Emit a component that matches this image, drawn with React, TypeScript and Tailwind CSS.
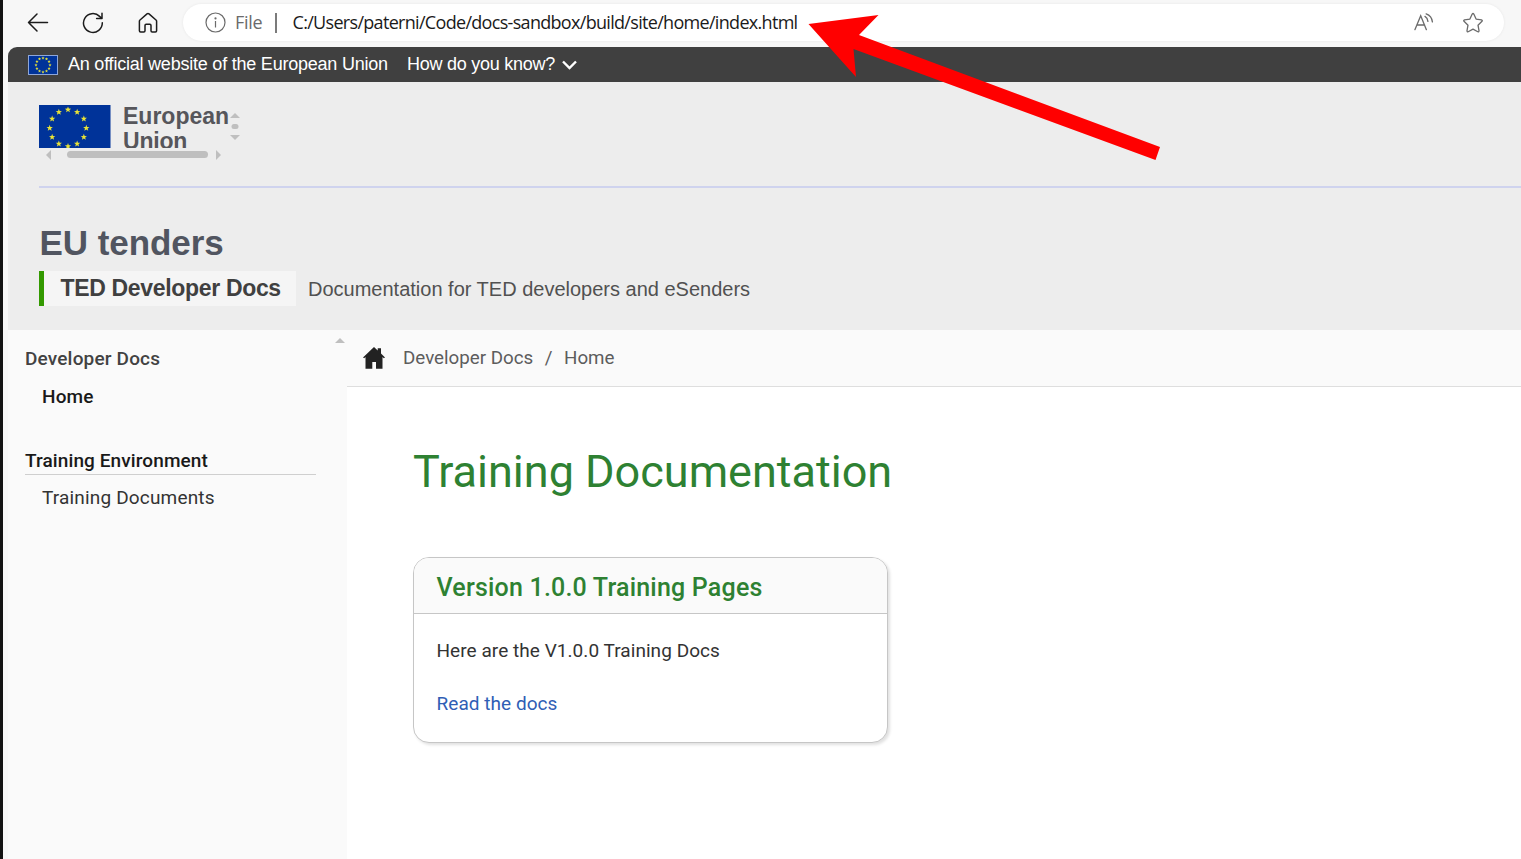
import React from "react";

const arial = "font-['Liberation_Sans',Arial,sans-serif]";
const segoe = "font-['Open_Sans','Noto_Sans',sans-serif]";

function star(cx: number, cy: number, r: number) {
  const pts: string[] = [];
  for (let i = 0; i < 10; i++) {
    const a = -Math.PI / 2 + (i * Math.PI) / 5;
    const d = i % 2 ? r * 0.42 : r;
    pts.push(`${(cx + d * Math.cos(a)).toFixed(2)},${(cy + d * Math.sin(a)).toFixed(2)}`);
  }
  return pts.join(" ");
}

function Stars({ cx, cy, ring, r }: { cx: number; cy: number; ring: number; r: number }) {
  return (
    <g fill="#e8e337">
      {Array.from({ length: 12 }, (_, i) => {
        const a = (i * Math.PI) / 6;
        return <polygon key={i} points={star(cx + ring * Math.cos(a), cy + ring * Math.sin(a), r)} />;
      })}
    </g>
  );
}

function Toolbar() {
  return (
    <header className="flex h-[47px] items-start bg-[#f7f7f7]">
      <nav className="flex h-[46px] w-[180px] shrink-0 items-center pl-[24px]">
        <svg width="22" height="22" viewBox="0 0 22 22" fill="none" stroke="#1c1c1c" strokeWidth="1.5" strokeLinecap="round" strokeLinejoin="round">
          <path d="M20.5 10.5H1.5M10 2L1.5 10.5L10 19" />
        </svg>
        <svg className="ml-[33px]" width="22" height="22" viewBox="0 0 22 22" fill="none" stroke="#1c1c1c" strokeWidth="1.5" strokeLinecap="round" strokeLinejoin="round">
          <path d="M20.3 10.8A9.4 9.4 0 1 1 17.6 4.4L19.6 6.2M20 1.2V6.4H14.6" />
        </svg>
        <svg className="ml-[33px]" width="22" height="22" viewBox="0 0 22 22" fill="none" stroke="#1c1c1c" strokeWidth="1.5" strokeLinejoin="round">
          <path d="M2.4 9.3Q2.4 8.5 3 8L10 1.9Q11 1.1 12 1.9L19 8Q19.6 8.5 19.6 9.3V18.8Q19.6 20 18.4 20H15.2Q14 20 14 18.8V13.4Q14 12.3 12.9 12.3H9.1Q8 12.3 8 13.4V18.8Q8 20 6.8 20H3.6Q2.4 20 2.4 18.8Z" />
        </svg>
      </nav>
      <div className="mt-[4px] flex h-[37px] w-[1321px] items-center rounded-full bg-white pl-[22px] shadow-[0_0_3px_rgba(0,0,0,0.07)]">
        <svg width="21" height="21" viewBox="0 0 21 21" fill="none" stroke="#6b6b6b" strokeWidth="1.2">
          <circle cx="10.5" cy="10.5" r="9.5" />
          <path d="M10.5 9v6.5" />
          <circle cx="10.5" cy="6.4" r="0.5" fill="#6b6b6b" />
        </svg>
        <span className={`${segoe} -mt-[2px] ml-[9px] w-[40px] whitespace-nowrap text-[18px] leading-[36px] tracking-[-0.3px] text-[#6b6b6b]`}>File</span>
        <span className="h-[20px] w-[1.5px] bg-[#7b7b7b]" />
        <span className={`${segoe} -mt-[2px] ml-[16px] whitespace-nowrap text-[18px] leading-[36px] tracking-[-0.69px] text-[#1a1a1a]`}>
          C:/Users/paterni/Code/docs-sandbox/build/site/home/index.html
        </span>
        <span className="flex-1" />
        <svg className="mr-[28px]" width="21" height="20" viewBox="0 0 21 20" fill="none" stroke="#6b6b6b" strokeWidth="1.3" strokeLinecap="round">
          <path d="M1.9 16.7L7.7 2.7L13.4 16.7M3.8 12H11.6M12 3.4Q14.6 5 14.9 8.4M13.2 .8Q18.8 2.7 19.4 8.9" />
        </svg>
        <svg className="mr-[20px]" width="22" height="22" viewBox="0 0 22 22" fill="none" stroke="#6b6b6b" strokeWidth="1.3" strokeLinejoin="round">
          <path d="M10.2 2.1Q11 .9 11.8 2.1L14.1 7.1L19.5 7.9Q20.8 8.3 20 9.3L16 13.2L17 18.7Q17 20.1 15.8 19.7L11 17.1L6.2 19.7Q5 20.1 5 18.7L6 13.2L2 9.3Q1.2 8.3 2.5 7.9L7.9 7.1Z" />
        </svg>
      </div>
    </header>
  );
}

function OfficialBar() {
  return (
    <div className={`${arial} flex h-[35px] items-center rounded-tl-[9px] bg-[#404040] pl-[20px] text-[18px] text-white`}>
      <svg width="30" height="20" viewBox="0 0 30 20">
        <rect x=".5" y=".5" width="29" height="19" fill="#039" stroke="#8ea6d8" />
        <Stars cx={15} cy={10} ring={7} r={1.7} />
      </svg>
      <span className="ml-[10px] w-[339px] whitespace-nowrap tracking-[-0.22px]">An official website of the European Union</span>
      <span className="whitespace-nowrap tracking-[-0.25px]">How do you know?</span>
      <svg className="ml-[7px] mt-[1px]" width="15" height="10" viewBox="0 0 15 10" fill="none" stroke="#fff" strokeWidth="2.4">
        <path d="M1 1.5L7.5 8L14 1.5" />
      </svg>
    </div>
  );
}

function SiteHeader() {
  return (
    <div className={`${arial} h-[248px] bg-[#ededed] pl-[31px] pt-[23px]`}>
      <div className="h-[81px]">
        <div className="flex h-[43px]">
          <svg width="72" height="43" viewBox="0 0 72 43">
            <rect width="71.5" height="43" fill="#039" />
            <Stars cx={29} cy={23} ring={18.3} r={3.3} />
          </svg>
          <div className="ml-[12px] h-[43px] w-[107px] overflow-hidden whitespace-nowrap text-[23px] font-bold leading-[25px] text-[#56565b]">
            <div className="-mt-[1px]">European</div>
            <div className="tracking-[-0.2px]">Union</div>
          </div>
          <svg className="-ml-[0.5px] mt-[8px]" width="10" height="28" viewBox="0 0 10 28" fill="#bfbfbf">
            <path d="M0 5L5 0L10 5Z" />
            <rect x="1.5" y="11" width="7" height="5" rx="2.5" />
            <path d="M0 22L5 27L10 22Z" />
          </svg>
        </div>
        <div className="flex h-[13px] items-center pl-[7px]">
          <svg width="175" height="10" viewBox="0 0 175 10" fill="#bfbfbf">
            <path d="M5 0V10L0 5Z" />
            <rect x="21" y="1" width="141" height="7" rx="3.5" />
            <path d="M170 0V10L175 5Z" />
          </svg>
        </div>
      </div>
      <div className="h-[2px] bg-[#cfd3ee]" />
      <h1 className="mt-[35px] h-[40px] whitespace-nowrap pl-[0.5px] text-[35px] font-bold leading-[40px] tracking-[-0.05px] text-[#515560]">EU tenders</h1>
      <div className="mt-[8px] flex h-[35px] items-center">
        <div className="h-[35px] w-[257px] whitespace-nowrap border-l-[5px] border-[#339900] bg-[#f5f5f5] pl-[16.5px] text-[23px] font-bold leading-[35px] tracking-[-0.33px] text-[#404040]">
          TED Developer Docs
        </div>
        <div className="ml-[12px] whitespace-nowrap text-[20px] leading-[36px] text-[#515151]">
          Documentation for TED developers and eSenders
        </div>
      </div>
    </div>
  );
}

function Sidebar() {
  return (
    <aside className="flex w-[338.5px] shrink-0 justify-between bg-[#fafafa] pl-[17px] text-[19px] leading-[24px] tracking-[0.17px]">
      <div className="w-[291px] whitespace-nowrap pt-[17px]">
        <div className="font-medium text-[#424242]">Developer Docs</div>
        <div className="mt-[14px] pl-[17px] font-medium text-[#191919]">Home</div>
        <div className="mt-[40px] h-[26px] border-b border-[#cfcfcf] font-medium tracking-[0.1px] text-[#191919]">Training Environment</div>
        <div className="mt-[11px] pl-[17px] text-[#333333]">Training Documents</div>
      </div>
      <svg className="mr-[2px] mt-[8px]" width="10" height="5" viewBox="0 0 10 5" fill="#bfbfbf">
        <path d="M0 5L5 0L10 5Z" />
      </svg>
    </aside>
  );
}

function Main() {
  return (
    <main className="min-w-0 flex-1 bg-white">
      <div className="flex h-[57px] items-center whitespace-nowrap border-b border-[#dedede] bg-[#fafafa] pl-[15.5px] text-[18.75px] text-[#5d5d5d]">
        <svg width="24" height="24" viewBox="0 0 24 24" fill="#222">
          <path d="M12 1L15.7 4.5V2.2H19V7.6L23 11.5L21.8 12.2L20.5 11V22.8H14V16H10.3V22.8H3.5V11L2.2 12.2L1 11.5Z" />
        </svg>
        <span className="ml-[17px] mt-[1px]">Developer Docs</span>
        <span className="mx-[11.5px] mt-[1px]">/</span>
        <span className="mt-[1px]">Home</span>
      </div>
      <div className="pl-[66.5px] pt-[55px]">
        <h2 className="h-[60px] whitespace-nowrap text-[45px] leading-[60px] text-[#2e8132]">Training Documentation</h2>
        <section className="mt-[55px] h-[186px] w-[475px] overflow-hidden rounded-[16px] border border-[#c6c6c6] bg-white shadow-[2px_2px_3px_rgba(0,0,0,0.12)]">
          <h3 className="h-[56px] whitespace-nowrap border-b border-[#c6c6c6] bg-[#fafafa] pl-[22.5px] text-[25px] font-medium leading-[60px] tracking-[0.2px] text-[#2e8132]">
            Version 1.0.0 Training Pages
          </h3>
          <div className="whitespace-nowrap pl-[22.5px] pt-[24px] text-[19px] leading-[26px] tracking-[0.05px] text-[#333333]">
            <p>Here are the V1.0.0 Training Docs</p>
            <p className="mt-[27px] text-[#2f5eb5]">Read the docs</p>
          </div>
        </section>
      </div>
    </main>
  );
}

export default function App() {
  return (
    <div className="relative flex h-[859px] w-[1521px] flex-col overflow-hidden border-l-[3px] border-[#121212] bg-[#f7f7f7] font-['Roboto',sans-serif]">
      <Toolbar />
      <div className="flex min-h-0 flex-1 flex-col pl-[5px]">
        <OfficialBar />
        <SiteHeader />
        <div className="flex min-h-0 flex-1">
          <Sidebar />
          <Main />
        </div>
      </div>
      <svg className="absolute left-[797px] top-0" width="370" height="170" viewBox="800 0 370 170" fill="#ff0000">
        <polygon points="808.5,24 878.5,15 859,35 1160,147 1155.5,160 853.5,49 856,77" />
      </svg>
    </div>
  );
}
